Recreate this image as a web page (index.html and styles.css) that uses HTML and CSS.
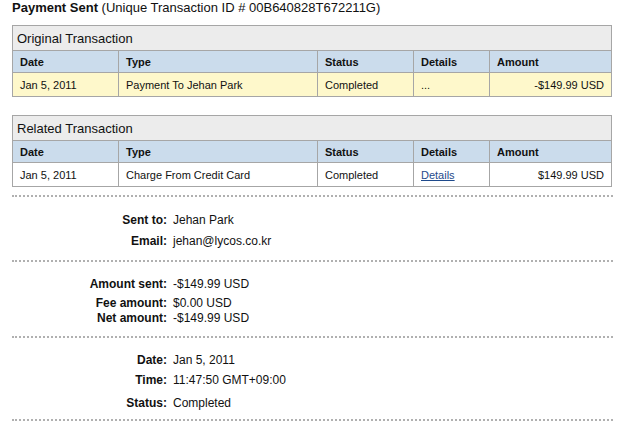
FILE: index.html
```html
<!DOCTYPE html>
<html lang="en">
<head>
    <meta charset="UTF-8">
    <title>Transaction Details</title>
    <link rel="stylesheet" href="styles.css">
</head>
<body>
    <h1 class="title"><b>Payment Sent</b> (Unique Transaction ID # 00B640828T672211G)</h1>

    <table class="txn">
        <tr><th class="caption" colspan="5">Original Transaction</th></tr>
        <tr class="head">
            <th class="c-date">Date</th>
            <th class="c-type">Type</th>
            <th class="c-status">Status</th>
            <th class="c-details">Details</th>
            <th class="c-amount">Amount</th>
        </tr>
        <tr class="hl">
            <td>Jan 5, 2011</td>
            <td>Payment To Jehan Park</td>
            <td>Completed</td>
            <td>...</td>
            <td class="num">-$149.99 USD</td>
        </tr>
    </table>

    <table class="txn">
        <tr><th class="caption" colspan="5">Related Transaction</th></tr>
        <tr class="head">
            <th class="c-date">Date</th>
            <th class="c-type">Type</th>
            <th class="c-status">Status</th>
            <th class="c-details">Details</th>
            <th class="c-amount">Amount</th>
        </tr>
        <tr>
            <td>Jan 5, 2011</td>
            <td>Charge From Credit Card</td>
            <td>Completed</td>
            <td><a href="#">Details</a></td>
            <td class="num">$149.99 USD</td>
        </tr>
    </table>

    <div class="info">
        <div class="row"><span class="lbl">Sent to:</span><span>Jehan Park</span></div>
        <div class="row"><span class="lbl">Email:</span><span>jehan@lycos.co.kr</span></div>
    </div>
    <div class="info">
        <div class="row"><span class="lbl">Amount sent:</span><span>-$149.99 USD</span></div>
        <div class="row near"><span class="lbl">Fee amount:</span><span>$0.00 USD</span></div>
        <div class="row tight"><span class="lbl">Net amount:</span><span>-$149.99 USD</span></div>
    </div>
    <div class="info last">
        <div class="row"><span class="lbl">Date:</span><span>Jan 5, 2011</span></div>
        <div class="row"><span class="lbl">Time:</span><span>11:47:50 GMT+09:00</span></div>
        <div class="row loose"><span class="lbl">Status:</span><span>Completed</span></div>
    </div>
</body>
</html>
```

FILE: styles.css
```css
body {
    font-family: "Liberation Sans", Arial, sans-serif;
    color: #111;
    background: #fff;
    margin: 0;
    padding: 0 12px;
}
.title {
    font-size: 13px;
    font-weight: normal;
    line-height: 16px;
    margin: 0 0 9px;
}
.txn {
    width: 600px;
    border-collapse: collapse;
    border: 1px solid #a6a6a6;
    font-size: 11px;
    margin-bottom: 18px;
}
.txn:last-of-type {
    margin-bottom: 8px;
}
.txn th,
.txn td {
    border: 1px solid #a6a6a6;
    padding: 0 7px;
    text-align: left;
}
.txn .caption {
    background: #ececec;
    font-size: 13px;
    font-weight: normal;
    height: 24px;
    padding: 0 4px;
}
.head th {
    background: #cbdcec;
    height: 21px;
}
.txn td {
    height: 23px;
}
.hl td {
    background: #fef8cb;
}
.c-date { width: 91px; }
.c-type { width: 184px; }
.c-status { width: 81px; }
.c-details { width: 61px; }
.txn .num {
    text-align: right;
}
.txn a {
    color: #1f4a8c;
}
.info {
    width: 601px;
    border-top: 2px dotted #b0b0b0;
    padding: 16px 0 11px;
    font-size: 12px;
    line-height: 15px;
}
.info + .info {
    padding: 15px 0 10px;
}
.info.last {
    border-bottom: 2px dotted #b0b0b0;
    padding-bottom: 8px;
}
.row {
    display: flex;
    gap: 6px;
    margin-top: 6px;
}
.row:first-child { margin-top: 0; }
.row.near { margin-top: 4px; }
.row.tight { margin-top: 0; }
.info.last .row { margin-top: 5px; }
.info.last .row:first-child { margin-top: 0; }
.info.last .row.loose { margin-top: 8px; }
.lbl {
    width: 155px;
    text-align: right;
    font-weight: bold;
}
```
